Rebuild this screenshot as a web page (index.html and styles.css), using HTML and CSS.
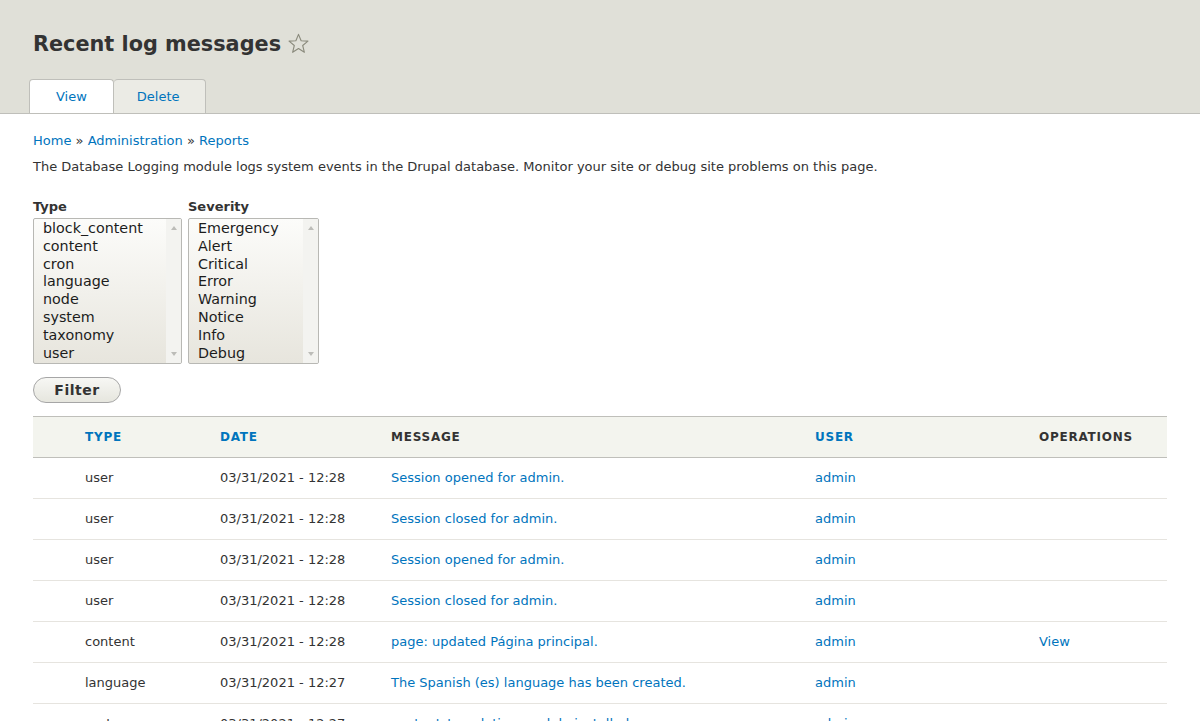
FILE: index.html
```html
<!DOCTYPE html>
<html lang="en">
<head>
<meta charset="utf-8">
<title>Recent log messages</title>
<link rel="stylesheet" href="styles.css">
</head>
<body>
<header class="page-header">
  <div class="title-row">
    <h1 class="page-title">Recent log messages</h1>
    <svg class="star" width="21" height="21" viewBox="0 0 20 20" aria-hidden="true">
      <polygon points="10,1.3 12.5,7.4 19,7.7 14,11.9 15.6,18.4 10,14.8 4.4,18.4 6,11.9 1,7.7 7.5,7.4" fill="none" stroke="#8a8a7c" stroke-width="1.05" stroke-linejoin="round"/>
    </svg>
  </div>
  <nav class="tabs">
    <a class="tab tab-active tab-view" href="#">View</a>
    <a class="tab tab-delete" href="#">Delete</a>
  </nav>
</header>

<main class="content">
  <nav class="breadcrumb">
    <a href="#">Home</a> <span class="sep">»</span> <a href="#">Administration</a> <span class="sep">»</span> <a href="#">Reports</a>
  </nav>
  <p class="description">The Database Logging module logs system events in the Drupal database. Monitor your site or debug site problems on this page.</p>

  <form class="filters">
    <div class="filter-fields">
      <div class="field">
        <label class="field-label">Type</label>
        <div class="listbox listbox-type" role="listbox">
          <ul class="options">
            <li>block_content</li>
            <li>content</li>
            <li>cron</li>
            <li>language</li>
            <li>node</li>
            <li>system</li>
            <li>taxonomy</li>
            <li>user</li>
          </ul>
          <div class="scrollbar"><span class="arrow arrow-up"></span><span class="arrow arrow-down"></span></div>
        </div>
      </div>
      <div class="field">
        <label class="field-label">Severity</label>
        <div class="listbox listbox-severity" role="listbox">
          <ul class="options">
            <li>Emergency</li>
            <li>Alert</li>
            <li>Critical</li>
            <li>Error</li>
            <li>Warning</li>
            <li>Notice</li>
            <li>Info</li>
            <li>Debug</li>
          </ul>
          <div class="scrollbar"><span class="arrow arrow-up"></span><span class="arrow arrow-down"></span></div>
        </div>
      </div>
    </div>
    <button type="button" class="button">Filter</button>
  </form>

  <table class="log-table">
    <colgroup>
      <col class="c-icon"><col class="c-type"><col class="c-date"><col class="c-msg"><col class="c-user"><col class="c-ops">
    </colgroup>
    <thead>
      <tr>
        <th></th>
        <th><a href="#">Type</a></th>
        <th><a href="#">Date</a></th>
        <th>Message</th>
        <th><a href="#">User</a></th>
        <th>Operations</th>
      </tr>
    </thead>
    <tbody>
      <tr><td></td><td>user</td><td>03/31/2021 - 12:28</td><td><a href="#">Session opened for admin.</a></td><td><a href="#">admin</a></td><td></td></tr>
      <tr><td></td><td>user</td><td>03/31/2021 - 12:28</td><td><a href="#">Session closed for admin.</a></td><td><a href="#">admin</a></td><td></td></tr>
      <tr><td></td><td>user</td><td>03/31/2021 - 12:28</td><td><a href="#">Session opened for admin.</a></td><td><a href="#">admin</a></td><td></td></tr>
      <tr><td></td><td>user</td><td>03/31/2021 - 12:28</td><td><a href="#">Session closed for admin.</a></td><td><a href="#">admin</a></td><td></td></tr>
      <tr><td></td><td>content</td><td>03/31/2021 - 12:28</td><td><a href="#">page: updated Página principal.</a></td><td><a href="#">admin</a></td><td><a href="#">View</a></td></tr>
      <tr><td></td><td>language</td><td>03/31/2021 - 12:27</td><td><a href="#">The Spanish (es) language has been created.</a></td><td><a href="#">admin</a></td><td></td></tr>
      <tr><td></td><td>system</td><td>03/31/2021 - 12:27</td><td><a href="#">content_translation module installed.</a></td><td><a href="#">admin</a></td><td></td></tr>
    </tbody>
  </table>
</main>
</body>
</html>
```

FILE: styles.css
```css
html, body {
  margin: 0;
  padding: 0;
}
body {
  font-family: "DejaVu Sans", Verdana, sans-serif;
  font-size: 13px;
  color: #333;
  background: #fff;
}
a {
  color: #0074bd;
  text-decoration: none;
}

/* Header */
.page-header {
  background: #e0e0d8;
  border-bottom: 1px solid #bfbfba;
  padding: 31px 0 0 0;
}
.title-row {
  display: flex;
  align-items: center;
  gap: 7px;
  padding: 0 33px;
  height: 26px;
}
.page-title {
  margin: 0;
  font-size: 20.8px;
  font-weight: bold;
  line-height: 26px;
  color: #333;
}
.star {
  display: block;
  margin-top: -2px;
}
.tabs {
  display: flex;
  margin-top: 22px;
  padding-left: 29px;
}
.tab {
  display: block;
  height: 33px;
  line-height: 33px;
  border: 1px solid #bfbfba;
  border-bottom: 0;
  border-radius: 4px 4px 0 0;
  background: #ebebe5;
  font-size: 13px;
}
.tab-active {
  background: #fff;
}
.tab-view {
  padding: 0 26px 0 26px;
}
.tab-delete {
  border-left: 0;
  padding: 0 25px 0 23px;
}

/* Content */
.content {
  padding: 18px 33px 40px;
}
.breadcrumb {
  line-height: 18px;
}
.breadcrumb .sep {
  color: #333;
}
.description {
  margin: 8px 0 0;
  line-height: 18px;
}

/* Filters */
.filters {
  margin-top: 22px;
}
.filter-fields {
  display: flex;
  gap: 6px;
}
.field {
  display: flex;
  flex-direction: column;
}
.field-label {
  font-weight: bold;
  font-size: 13px;
  line-height: 18px;
  margin-bottom: 2px;
  color: #333;
}
.listbox {
  display: flex;
  border: 1px solid #b8b8b4;
  border-radius: 2px;
  background: linear-gradient(to bottom, #fcfcfa 0%, #e7e5dd 100%);
  height: 144px;
  overflow: hidden;
}
.listbox-type {
  width: 147px;
}
.listbox-severity {
  width: 129px;
}
.options {
  list-style: none;
  margin: 0;
  padding: 0.7px 0 0 9px;
  flex: 1;
  font-size: 14.3px;
  line-height: 17.9px;
  color: #1c1c1c;
}
.scrollbar {
  width: 15px;
  background: #f3f3f0;
  display: flex;
  flex-direction: column;
  justify-content: space-between;
  align-items: center;
  padding: 7px 0 7px;
  box-sizing: border-box;
}
.arrow {
  width: 0;
  height: 0;
  border-left: 3.5px solid transparent;
  border-right: 3.5px solid transparent;
}
.arrow-up {
  border-bottom: 4px solid #bcbcb8;
}
.arrow-down {
  border-top: 4px solid #bcbcb8;
}

.button {
  display: block;
  margin-top: 13px;
  width: 88px;
  height: 26px;
  border: 1px solid #a6a6a6;
  border-radius: 20px;
  background: linear-gradient(to bottom, #f7f7f4 0%, #e6e6de 100%);
  font-family: "DejaVu Sans", Verdana, sans-serif;
  font-weight: bold;
  font-size: 14px;
  letter-spacing: 0.5px;
  color: #333;
  padding: 0;
  cursor: pointer;
}

/* Table */
.log-table {
  margin-top: 13px;
  width: 100%;
  table-layout: fixed;
  border-collapse: separate;
  border-spacing: 0;
}
.c-icon { width: 40px; }
.c-type { width: 135px; }
.c-date { width: 171px; }
.c-msg { width: 424px; }
.c-user { width: 224px; }
.c-ops { width: 140px; }

.log-table th,
.log-table td {
  text-align: left;
  vertical-align: top;
  padding: 11px 12px 12px;
  line-height: 17px;
  white-space: nowrap;
  overflow: hidden;
}
.log-table th {
  padding: 12px 12px 11px;
  background: #f3f4ee;
  border-top: 1px solid #bfbfba;
  border-bottom: 1px solid #bfbfba;
  font-size: 12px;
  font-weight: bold;
  text-transform: uppercase;
  letter-spacing: 0.75px;
  color: #333;
}
.log-table td {
  border-bottom: 1px solid #e6e4df;
  font-size: 13px;
  color: #333;
}
```
